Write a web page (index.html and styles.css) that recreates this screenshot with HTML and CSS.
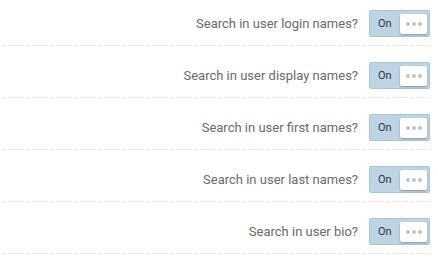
FILE: index.html
```html
<!DOCTYPE html>
<html lang="en">
<head>
    <meta charset="UTF-8" />
    <meta name="viewport" content="width=device-width, initial-scale=1.0" />
    <title>Search settings</title>
    <link rel="stylesheet" href="styles.css">
</head>
<body>
    <div class="settings">
        <div class="setting-row">
            <label class="setting-label">Search in user login names?</label>
            <div class="toggle"><span class="toggle-text">On</span><span class="knob"><i></i><i></i><i></i></span></div>
        </div>
        <div class="setting-row">
            <label class="setting-label">Search in user display names?</label>
            <div class="toggle"><span class="toggle-text">On</span><span class="knob"><i></i><i></i><i></i></span></div>
        </div>
        <div class="setting-row">
            <label class="setting-label">Search in user first names?</label>
            <div class="toggle"><span class="toggle-text">On</span><span class="knob"><i></i><i></i><i></i></span></div>
        </div>
        <div class="setting-row">
            <label class="setting-label">Search in user last names?</label>
            <div class="toggle"><span class="toggle-text">On</span><span class="knob"><i></i><i></i><i></i></span></div>
        </div>
        <div class="setting-row">
            <label class="setting-label">Search in user bio?</label>
            <div class="toggle"><span class="toggle-text">On</span><span class="knob"><i></i><i></i><i></i></span></div>
        </div>
    </div>
</body>
</html>
```

FILE: styles.css
```css
body {
    margin: 0;
    background: #fff;
    font-family: Roboto, "Liberation Sans", sans-serif;
}
.settings {
    width: 430px;
    padding: 2px 0 0 2px;
    box-sizing: border-box;
}
.setting-row {
    display: flex;
    align-items: center;
    justify-content: flex-end;
    gap: 11px;
    padding: 8px 0 9px;
    background: repeating-linear-gradient(to right, #e4e4e4 0 4px, transparent 4px 6px) bottom / 100% 1px no-repeat;
}
.setting-row + .setting-row {
    margin-top: 8px;
}
.setting-label {
    font-size: 13px;
    color: #6a6a6a;
}
.toggle {
    display: flex;
    align-items: center;
    justify-content: space-between;
    width: 61px;
    height: 27px;
    box-sizing: border-box;
    padding: 0 2px 0 8px;
    background: #bcd4e4;
    border: 1px solid #aac3d5;
    border-radius: 2px;
}
.toggle-text {
    font-size: 11px;
    color: #333;
}
.knob {
    display: flex;
    align-items: center;
    justify-content: center;
    gap: 2px;
    width: 27px;
    height: 20px;
    background: #fff;
    border-radius: 2px;
    box-shadow: 0 1px 2px rgba(0, 0, 0, 0.3);
}
.knob i {
    width: 4px;
    height: 4px;
    border-radius: 50%;
    background: #c4c4c4;
}
```
